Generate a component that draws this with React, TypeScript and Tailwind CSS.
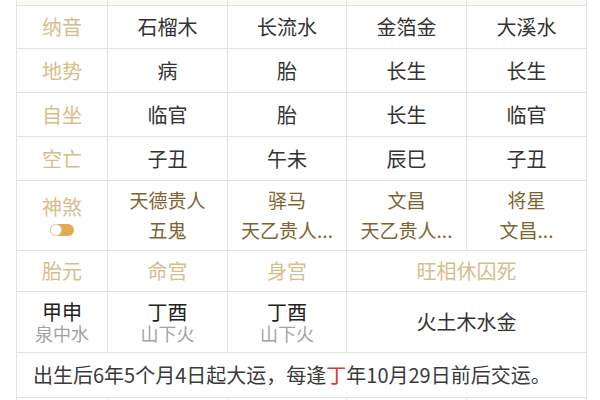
import React from "react";

const cell = "flex items-center justify-center border-r border-b border-[#e3e3e3]";
const label = "text-[20px] text-[#d8bd8c]";
const value = "text-[20px] text-[#333333]";
const shen = "text-[19px] leading-[30px] text-[#7f6431]";

type Row = { name: string; cols: string[]; h: string };

const rows: Row[] = [
  { name: "纳音", cols: ["石榴木", "长流水", "金箔金", "大溪水"], h: "h-[43px]" },
  { name: "地势", cols: ["病", "胎", "长生", "长生"], h: "h-[44px]" },
  { name: "自坐", cols: ["临官", "胎", "长生", "临官"], h: "h-[44px]" },
  { name: "空亡", cols: ["子丑", "午未", "辰巳", "子丑"], h: "h-[44px]" },
];

const shensha = [
  ["天德贵人", "五鬼"],
  ["驿马", "天乙贵人..."],
  ["文昌", "天乙贵人..."],
  ["将星", "文昌..."],
];

const gong = [
  { top: "甲申", sub: "泉中水" },
  { top: "丁酉", sub: "山下火" },
  { top: "丁酉", sub: "山下火" },
];

function Toggle() {
  return (
    <div className="relative mt-[5px] h-[12px] w-[24px] rounded-full bg-[#e2aa55]">
      <div className="absolute left-0 top-0 h-[12px] w-[12px] rounded-full border border-[#d9d2c4] bg-white" />
    </div>
  );
}

export default function App() {
  return (
    <div
      className="h-[400px] w-[600px] overflow-hidden bg-white"
      style={{ fontFamily: '"Noto Sans CJK SC", "Noto Sans", sans-serif' }}
    >
      <div className="ml-[16px] grid w-[570px] grid-cols-[91px_120px_119px_120px_120px] border-l border-[#e3e3e3]">
        {/* cut-off row above */}
        {[0, 1, 2, 3, 4].map((i) => (
          <div key={i} className={`${cell} h-[6px] bg-[#fbfaf5]`} />
        ))}

        {rows.map((r) => (
          <React.Fragment key={r.name}>
            <div className={`${cell} ${r.h} ${label}`}>{r.name}</div>
            {r.cols.map((c, i) => (
              <div key={i} className={`${cell} ${r.h} ${value}`}>{c}</div>
            ))}
          </React.Fragment>
        ))}

        {/* 神煞 */}
        <div className={`${cell} h-[70px] flex-col`}>
          <span className={`${label} leading-[24px]`}>神煞</span>
          <Toggle />
        </div>
        {shensha.map((s, i) => (
          <div key={i} className={`${cell} h-[70px] flex-col pb-[2px]`}>
            <span className={shen}>{s[0]}</span>
            <span className={shen}>{s[1]}</span>
          </div>
        ))}

        {/* 胎元 命宫 身宫 */}
        <div className={`${cell} h-[41px] ${label}`}>胎元</div>
        <div className={`${cell} h-[41px] ${label}`}>命宫</div>
        <div className={`${cell} h-[41px] ${label}`}>身宫</div>
        <div className={`${cell} col-span-2 h-[41px] ${label}`}>旺相休囚死</div>

        {gong.map((g, i) => (
          <div key={i} className={`${cell} h-[61px] flex-col`}>
            <span className="text-[20px] leading-[23px] text-[#222222]">{g.top}</span>
            <span className="text-[18px] leading-[21px] text-[#a3a3a3]">{g.sub}</span>
          </div>
        ))}
        <div className={`${cell} col-span-2 h-[61px] ${value}`}>火土木水金</div>

        {/* 大运 */}
        <div className="col-span-5 flex h-[45px] items-center border-r border-b border-[#e3e3e3] pl-[16px] text-[20px] text-[#3a3a3a]">
          出生后6年5个月4日起大运，每逢<span className="text-[#e0392f]">丁</span>年10月29日前后交运。
        </div>

        {[0, 1, 2, 3, 4].map((i) => (
          <div key={i} className={`${cell} h-[30px]`} />
        ))}
      </div>
    </div>
  );
}
